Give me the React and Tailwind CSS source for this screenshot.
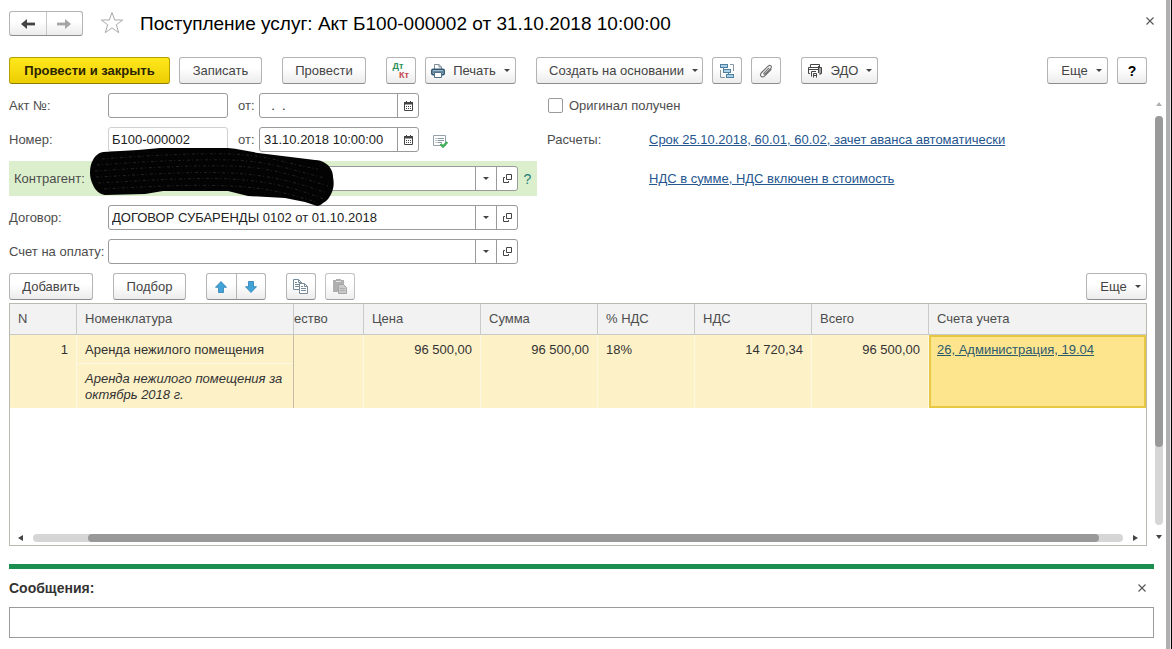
import React, { useState } from 'react';

const columns = [
    { title: 'N', width: 'w-[67px]' },
    { title: 'Номенклатура', width: 'w-[217px]' },
    { title: 'ество', width: 'w-[70px]', scrolled: true },
    { title: 'Цена', width: 'w-[117px]' },
    { title: 'Сумма', width: 'w-[117px]' },
    { title: '% НДС', width: 'w-[97px]' },
    { title: 'НДС', width: 'w-[117px]' },
    { title: 'Всего', width: 'w-[117px]' },
    { title: 'Счета учета', width: '' },
];

const Caret = () => (
    <svg viewBox="0 0 6 3" className="h-[3px] w-1.5 shrink-0" fill="#444">
        <path d="M0 0h6L3 3z" />
    </svg>
);

const ArrowIcon = ({ className }) => (
    <svg viewBox="0 0 14 10" className={className} fill="none" stroke="currentColor">
        <path d="M2 5H14" strokeWidth="2.8" />
        <path d="M0 5L6 0V10z" fill="currentColor" stroke="none" />
    </svg>
);

const StarIcon = () => (
    <svg viewBox="0 0 24 23" className="h-[23px] w-6" fill="#fff" stroke="#a9a9a9" strokeWidth="1">
        <path d="M12 1.5L14.7 9H22.7L16.3 13.8L18.7 21.6L12 16.9L5.3 21.6L7.7 13.8L1.3 9H9.3z" />
    </svg>
);

const CloseIcon = () => (
    <svg viewBox="0 0 8 8" className="h-2 w-2" stroke="#555" strokeWidth="1.1">
        <path d="M0.5 0.5L7.5 7.5M7.5 0.5L0.5 7.5" />
    </svg>
);

const PrinterIcon = () => (
    <svg viewBox="0 0 14 14" className="h-3.5 w-3.5 shrink-0">
        <path d="M3.5 6V0.5H8L10.5 3V6" fill="#fff" stroke="#7c8c98" />
        <path d="M8 0.5V3H10.5" fill="none" stroke="#7c8c98" />
        <rect x="0.75" y="5.25" width="12.5" height="5.5" rx="1.5" fill="#9db9ca" stroke="#2f5673" strokeWidth="1.5" />
        <path d="M2 8H12" stroke="#2f5673" />
        <path d="M3.5 8.5H10.5V13.5H3.5z" fill="#fff" stroke="#4d7088" />
    </svg>
);

const StructureIcon = () => (
    <svg viewBox="0 0 16 16" className="h-4 w-4">
        <path d="M11 1.5H14.5V8M1.5 7V14.5H6" fill="none" stroke="#8798a4" />
        <path d="M4.5 5V7.5M9.5 9V12" stroke="#4f80a2" />
        <rect x="1.5" y="1.5" width="7" height="3" fill="#a9cfe6" stroke="#4f80a2" />
        <rect x="4.5" y="6.5" width="7" height="3" fill="#a9cfe6" stroke="#4f80a2" />
        <rect x="7.5" y="11.5" width="7" height="3" fill="#a9cfe6" stroke="#4f80a2" />
    </svg>
);

const ClipIcon = () => (
    <svg viewBox="0 0 14 14" className="h-3.5 w-3.5" fill="none" stroke="#707070" strokeWidth="1.1" strokeLinecap="round">
        <path d="M9.8 4.2L5.2 8.8C4.3 9.9 5.4 10.8 6.3 9.9L11.6 4.7C13.6 2.6 11.2 0.2 9.1 2.1L2.6 8.5C-0.2 11.4 3 14.6 5.8 11.8L12 5.7" />
    </svg>
);

const EdoIcon = () => (
    <svg viewBox="0 0 16 14" className="h-3.5 w-4 shrink-0" fill="none" stroke="#444">
        <path d="M3.5 3V0.5H12.5V3" />
        <path d="M3 9.5H1.5V3.5H14.5V9.5H13" />
        <path d="M1 5.5H11.5M4.5 12.5V7.5H9M11.5 2V9" />
        <path d="M6.5 13.5V9.5H9.5V13.5M6.5 11.5H9.5M13 3V11" />
    </svg>
);

const CalendarIcon = () => (
    <svg viewBox="0 0 9 10" className="h-2.5 w-[9px]">
        <path d="M0.5 2V9.5H8.5V2" fill="#fff" stroke="#444" />
        <path d="M0 1H9V3.5H0zM2 0H3V1H2zM6 0H7V1H6z" fill="#444" />
        <path d="M2 5.5H3M4 5.5H5M6 5.5H7M2 7.5H3M4 7.5H5M6 7.5H7" stroke="#444" />
    </svg>
);

const OpenIcon = () => (
    <svg viewBox="0 0 9 9" className="h-[9px] w-[9px]" fill="none" stroke="#444">
        <path d="M3.5 0.5H8.5V5.5H3.5z" />
        <path d="M2 3.5H0.5V8.5H5.5V7" />
    </svg>
);

const PostedIcon = () => (
    <svg viewBox="0 0 15 13" className="h-[13px] w-[15px]">
        <path d="M0.5 0.5H12.5V10.5H0.5z" fill="#fff" stroke="#93a1ab" />
        <path d="M2.5 3.5H3.5M4.5 3.5H11M2.5 5.5H3.5M4.5 5.5H11M2.5 7.5H3.5M4.5 7.5H9" stroke="#8a99a4" />
        <path d="M7.5 9L10 11.5L14.3 7" fill="none" stroke="#3fae55" strokeWidth="2.4" />
    </svg>
);

const MoveIcon = ({ className }) => (
    <svg viewBox="0 0 12 12" className={className}>
        <path d="M6 0.5L11.5 6.3H8.5V11.5H3.5V6.3H0.5z" fill="#41a3d8" stroke="#2d7fb0" strokeWidth="0.8" />
    </svg>
);

const CopyIcon = () => (
    <svg viewBox="0 0 16 15" className="h-[15px] w-4" fill="#fff" stroke="#778a98">
        <path d="M0.5 0.5H5.5L8.5 3.5V10.5H0.5z" />
        <path d="M5.5 0.5V3.5H8.5M2 3.5H4M2 5.5H6M2 7.5H6" fill="none" />
        <path d="M6.5 4.5H11.5L14.5 7.5V14.5H6.5z" />
        <path d="M11.5 4.5V7.5H14.5M8 7.5H10M8 9.5H13M8 11.5H13" fill="none" />
    </svg>
);

const PasteIcon = () => (
    <svg viewBox="0 0 14 15" className="h-[15px] w-3.5">
        <path d="M0 1H3V0H8V1H11V13H0z" fill="#9c9c9c" />
        <path d="M3 2.5H8" stroke="#dcdcdc" />
        <path d="M5.5 5.5H10.5L13.5 8.5V14.5H5.5z" fill="#bdbdbd" stroke="#8e8e8e" />
        <path d="M7 9.5H12M7 11.5H12" stroke="#999" />
    </svg>
);

function Button({ className = '', children, ...rest }) {
    return (
        <button
            type="button"
            className={`flex h-[27px] shrink-0 items-center justify-center rounded-[3px] border border-[#b4b4b4] border-b-[#8c8c8c] bg-linear-to-b from-white from-40% to-[#ececec] whitespace-nowrap text-[#444] ${className}`}
            {...rest}
        >
            {children}
        </button>
    );
}

function DateField({ id, value, label }) {
    return (
        <div className="flex h-[25px] w-40 rounded-[3px] border border-[#9a9a9a] bg-white">
            <input id={id} defaultValue={value} className="w-full min-w-0 flex-1 px-1 text-[#222] outline-none" />
            <button type="button" aria-label={label} className="flex w-[21px] items-center justify-center border-l border-[#9a9a9a]">
                <CalendarIcon />
            </button>
        </div>
    );
}

function RefField({ id, value }) {
    return (
        <div className="flex h-[25px] w-[410px] rounded-[3px] border border-[#9a9a9a] bg-white">
            <input id={id} defaultValue={value} className="w-full min-w-0 flex-1 px-[3px] text-[#222] outline-none" />
            <button type="button" aria-label="Выбрать" className="flex w-[21px] items-center justify-center border-l border-[#9a9a9a]">
                <Caret />
            </button>
            <button type="button" aria-label="Открыть" className="flex w-[21px] items-center justify-center border-l border-[#9a9a9a]">
                <OpenIcon />
            </button>
        </div>
    );
}

// hand-drawn stroke that hides the counterparty name
const Redaction = () => (
    <svg viewBox="0 0 244 58" className="pointer-events-none absolute -top-[13px] left-[81px] h-[58px] w-[244px]">
        <path
            d="M0 25C0 19 1 15 3 12C5 8 8 5 13 4L48 2L70 0H138C148 1 158 3 168 5L225 12C229 12 232 13 235 15C240 18 243 23 243 29C244 34 244 39 242 44C240 49 237 53 233 55C231 57 229 58 227 58L215 54L195 50L158 48L138 43H73L55 46L15 47C9 46 5 42 3 37C1 33 0 29 0 25z"
            fill="#030303"
        />
        <g fill="none" stroke="#2f2f2f" strokeWidth="0.7" strokeDasharray="3 2 1 3">
            <path d="M12 11C50 8 100 5 140 6S200 17 228 21" />
            <path d="M7 17C50 14 100 11 140 12S205 23 235 30" />
            <path d="M5 23C50 20 100 17 140 18S205 28 238 38" />
            <path d="M6 29C50 27 100 23 140 25S205 34 237 45" />
            <path d="M8 35C50 33 100 29 140 31S205 40 234 51" />
            <path d="M14 41C50 39 100 36 140 38S200 46 226 54" />
        </g>
    </svg>
);

function ItemsTable() {
    const cell = 'border-r border-[#fdf8e6] px-2 pt-[7px] align-top';

    return (
        <table className="w-full table-fixed border-separate border-spacing-0 leading-4">
            <thead>
                <tr className="h-[31px] bg-[#f2f2f2] text-left text-[#4d4d4d]">
                    {columns.map((c, i) => (
                        <th
                            key={c.title}
                            scope="col"
                            className={`border-b border-[#c9c9c9] font-normal ${c.scrolled ? 'p-0' : 'px-2 py-0'} ${c.width} ${i < columns.length - 1 ? 'border-r' : ''}`}
                        >
                            {c.title}
                        </th>
                    ))}
                </tr>
            </thead>
            <tbody>
                <tr className="h-[73px] bg-[#fdf1c8] text-[#333]">
                    <td className={`${cell} text-right`}>1</td>
                    <td className="border-r border-[#c4bda4] p-0 align-top">
                        <div className="border-b border-[#fdf8e6] px-2 pt-[7px] pb-[5px]">Аренда нежилого помещения</div>
                        <div className="px-2 pt-[7px] italic">Аренда нежилого помещения за октябрь 2018 г.</div>
                    </td>
                    <td className={cell}></td>
                    <td className={`${cell} text-right`}>96 500,00</td>
                    <td className={`${cell} text-right`}>96 500,00</td>
                    <td className={cell}>18%</td>
                    <td className={`${cell} text-right`}>14 720,34</td>
                    <td className={`${cell} text-right`}>96 500,00</td>
                    <td className="border-2 border-[#e6c843] bg-[#fde58e] px-1.5 pt-[5px] align-top">
                        <a href="#accounts" className="text-[#2d5a6e] underline">26, Администрация, 19.04</a>
                    </td>
                </tr>
            </tbody>
        </table>
    );
}

export default function App() {
    const [original, setOriginal] = useState(false);

    return (
        <div className="flex min-h-screen bg-white font-['Liberation_Sans',Arial,sans-serif] text-[13px] text-[#4d4d4d]">
            <div className="flex min-w-0 flex-1 flex-col pb-[11px] pl-[9px]">
                <header className="flex h-[57px] items-start pt-[11px] pr-3">
                    <div className="flex h-[25px] w-[74px] rounded-[3px] border border-[#b4b4b4] border-b-[#8c8c8c] bg-linear-to-b from-white from-40% to-[#ececec]">
                        <button type="button" aria-label="Назад" className="flex flex-1 items-center justify-center border-r border-[#c9c9c9]">
                            <ArrowIcon className="h-2.5 w-3.5 text-[#444]" />
                        </button>
                        <button type="button" aria-label="Вперед" className="flex flex-1 items-center justify-center">
                            <ArrowIcon className="h-2.5 w-3.5 rotate-180 text-[#a5a5a5]" />
                        </button>
                    </div>
                    <button type="button" aria-label="В избранное" className="ml-[17px]">
                        <StarIcon />
                    </button>
                    <h1 className="ml-4 flex-1 text-[19px] leading-[26px] text-black">
                        Поступление услуг: Акт Б100-000002 от 31.10.2018 10:00:00
                    </h1>
                    <button type="button" aria-label="Закрыть" className="pt-1.5">
                        <CloseIcon />
                    </button>
                </header>

                <div className="flex items-center gap-5 pr-[19px]">
                    <div className="flex gap-[9px]">
                        <button type="button" className="h-[27px] w-[161px] rounded-[3px] border border-[#b89f00] border-b-[#8f7c00] bg-linear-to-b from-[#ffe81c] to-[#ecce00] font-bold whitespace-nowrap text-[#2b2400]">
                            Провести и закрыть
                        </button>
                        <Button className="w-[83px]">Записать</Button>
                    </div>
                    <Button className="w-[84px]">Провести</Button>
                    <div className="flex gap-[9px]">
                        <Button className="w-[30px] flex-col text-[9px] leading-[9px] font-bold" aria-label="Дт Кт">
                            <span className="mr-1.5 text-[#2c9158]">Дт</span>
                            <span className="ml-1.5 text-[#c4474b]">Кт</span>
                        </Button>
                        <Button className="w-[91px] gap-2">
                            <PrinterIcon />
                            Печать
                            <Caret />
                        </Button>
                    </div>
                    <div className="flex gap-[9px]">
                        <Button className="w-[167px] gap-2 pl-2">
                            Создать на основании
                            <Caret />
                        </Button>
                        <Button className="w-[30px]" aria-label="Структура подчиненности">
                            <StructureIcon />
                        </Button>
                        <Button className="w-[30px]" aria-label="Присоединенные файлы">
                            <ClipIcon />
                        </Button>
                    </div>
                    <Button className="w-[77px] gap-2">
                        <EdoIcon />
                        ЭДО
                        <Caret />
                    </Button>
                    <div className="ml-auto flex gap-[9px]">
                        <Button className="w-[61px] gap-2 pl-2">
                            Еще
                            <Caret />
                        </Button>
                        <Button className="w-[30px] text-sm font-bold text-black">?</Button>
                    </div>
                </div>

                <div className="flex flex-1 pt-[9px]">
                    <main className="flex min-w-0 flex-1 flex-col">
                        <div className="flex">
                            <div className="flex w-[528px] shrink-0 flex-col gap-[9px]">
                                <div className="flex items-center">
                                    <label htmlFor="act" className="w-[99px]">Акт №:</label>
                                    <input id="act" className="h-[25px] w-[120px] rounded-[3px] border border-[#9a9a9a] px-[3px] text-[#222] outline-none" />
                                    <label htmlFor="act-date" className="w-[31px] pl-2.5">от:</label>
                                    <DateField id="act-date" value="  .  ." label="Календарь" />
                                </div>
                                <div className="flex items-center">
                                    <label htmlFor="number" className="w-[99px]">Номер:</label>
                                    <input id="number" defaultValue="Б100-000002" className="h-[25px] w-[120px] rounded-[3px] border border-[#d0d0d0] px-[3px] text-[#222] outline-none" />
                                    <label htmlFor="number-date" className="w-[31px] pl-2.5">от:</label>
                                    <DateField id="number-date" value="31.10.2018 10:00:00" label="Календарь" />
                                    <span className="ml-3.5 pt-1">
                                        <PostedIcon />
                                    </span>
                                </div>
                                <div className="relative flex h-[35px] items-center bg-[#dbefcc] pl-[5px]">
                                    <label htmlFor="partner" className="w-[94px]">Контрагент:</label>
                                    <RefField id="partner" />
                                    <button type="button" className="flex-1 text-sm text-[#1f7d7a]">?</button>
                                    <Redaction />
                                </div>
                                <div className="flex items-center">
                                    <label htmlFor="contract" className="w-[99px]">Договор:</label>
                                    <RefField id="contract" value="ДОГОВОР СУБАРЕНДЫ 0102 от 01.10.2018" />
                                </div>
                                <div className="flex items-center">
                                    <label htmlFor="invoice" className="w-[99px] whitespace-nowrap">Счет на оплату:</label>
                                    <RefField id="invoice" />
                                </div>
                            </div>

                            <div className="flex flex-1 flex-col gap-[9px] pl-2.5">
                                <label className="flex h-[25px] items-center gap-1.5">
                                    <input
                                        type="checkbox"
                                        checked={original}
                                        onChange={() => setOriginal(!original)}
                                        className="ml-px h-[15px] w-[15px] appearance-none rounded-xs border border-[#9a9a9a] bg-white checked:bg-[#777]"
                                    />
                                    Оригинал получен
                                </label>
                                <div className="flex h-[25px] items-center">
                                    <span className="w-[102px]">Расчеты:</span>
                                    <a href="#settlements" className="text-[#26568f] underline">
                                        Срок 25.10.2018, 60.01, 60.02, зачет аванса автоматически
                                    </a>
                                </div>
                                <div className="flex h-[35px] items-center pl-[102px]">
                                    <a href="#vat" className="text-[#26568f] underline">
                                        НДС в сумме, НДС включен в стоимость
                                    </a>
                                </div>
                            </div>
                        </div>

                        <div className="flex gap-5 pt-[9px] pb-[3px]">
                            <Button className="w-[84px]">Добавить</Button>
                            <Button className="w-[73px]">Подбор</Button>
                            <div className="flex h-[27px] w-[60px] rounded-[3px] border border-[#b4b4b4] border-b-[#8c8c8c] bg-linear-to-b from-white from-40% to-[#ececec]">
                                <button type="button" aria-label="Вверх" className="flex flex-1 items-center justify-center border-r border-[#b4b4b4]">
                                    <MoveIcon className="h-3 w-3" />
                                </button>
                                <button type="button" aria-label="Вниз" className="flex flex-1 items-center justify-center">
                                    <MoveIcon className="h-3 w-3 rotate-180" />
                                </button>
                            </div>
                            <div className="flex gap-[9px]">
                                <Button className="w-[30px]" aria-label="Копировать">
                                    <CopyIcon />
                                </Button>
                                <Button className="w-[30px] opacity-80" aria-label="Вставить" disabled>
                                    <PasteIcon />
                                </Button>
                            </div>
                            <Button className="ml-auto w-[61px] gap-2 pl-2">
                                Еще
                                <Caret />
                            </Button>
                        </div>

                        <div className="flex flex-1 flex-col justify-between border border-[#b9b9b0]">
                            <ItemsTable />
                            <div className="flex h-[15px] items-center gap-2.5 px-2">
                                <svg viewBox="0 0 5 6" className="h-1.5 w-[5px]" fill="#444"><path d="M5 0V6L0 3z" /></svg>
                                <div className="h-2 flex-1 rounded-full bg-[#d6d6d6] pr-6 pl-[55px]">
                                    <div className="h-full rounded-full bg-[#999]"></div>
                                </div>
                                <svg viewBox="0 0 5 6" className="h-1.5 w-[5px]" fill="#444"><path d="M0 0V6L5 3z" /></svg>
                            </div>
                        </div>
                    </main>

                    <div className="flex w-[19px] flex-col items-center gap-2.5 pt-[9px] pr-[3px] pb-[7px] pl-2">
                        <svg viewBox="0 0 6 4" className="h-1 w-1.5" fill="#b0b0b0"><path d="M0 4H6L3 0z" /></svg>
                        <div className="w-2 flex-1 rounded-full bg-[#d6d6d6]">
                            <div className="h-[81%] rounded-full bg-[#999]"></div>
                        </div>
                        <svg viewBox="0 0 6 4" className="h-1 w-1.5" fill="#444"><path d="M0 0H6L3 4z" /></svg>
                    </div>
                </div>

                <section className="mt-[18px] mr-3 border-t-[5px] border-[#1a8f50]">
                    <div className="flex h-[38px] items-center justify-between pr-2">
                        <label htmlFor="messages" className="text-sm font-bold text-[#333]">Сообщения:</label>
                        <button type="button" aria-label="Закрыть сообщения">
                            <CloseIcon />
                        </button>
                    </div>
                    <input id="messages" readOnly className="block h-[31px] w-full border border-[#9a9a9a] px-2 outline-none" />
                </section>
            </div>
            <div className="w-1.5 border-r border-l-4 border-r-black border-l-[#b0b0b0] bg-[#e4e4e4]"></div>
        </div>
    );
}
